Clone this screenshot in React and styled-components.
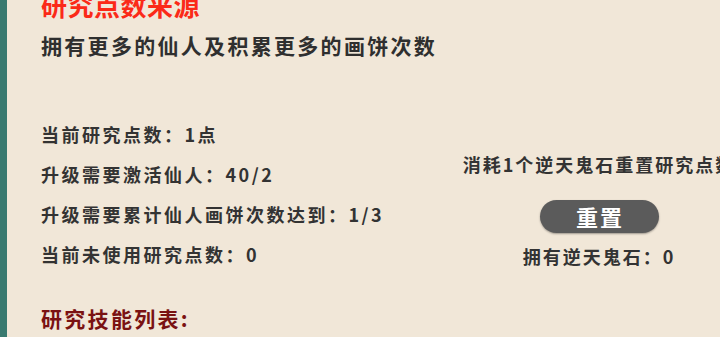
import React from "react";
import styled, { createGlobalStyle } from "styled-components";

const Global = createGlobalStyle`
  html, body {
    margin: 0;
    padding: 0;
    background: #f1e7d8;
    overflow: hidden;
  }
  body {
    font-family: "Noto Sans CJK SC", "Noto Sans", sans-serif;
  }
`;

const Page = styled.div`
  width: 720px;
  height: 337px;
  box-sizing: border-box;
  border-left: 7px solid #397a70;
  padding-left: 34px;
  overflow: hidden;
  background: #f1e7d8;
  display: flex;
  flex-direction: column;
`;

const Title = styled.h1`
  margin: -10px 0 0;
  font-size: 26px;
  line-height: 30px;
  font-weight: 700;
  color: #fb2a18;
  letter-spacing: 0.5px;
`;

const Subtitle = styled.h2`
  margin: 10px 0 0;
  font-size: 21px;
  line-height: 30px;
  font-weight: 700;
  color: #2f2f2f;
  letter-spacing: 2.3px;
`;

const Stats = styled.section`
  display: grid;
  grid-template-columns: 426px 264px;
  margin-top: 54px;
`;

const StatList = styled.div`
  display: flex;
  flex-direction: column;
`;

const StatLine = styled.div`
  font-size: 18px;
  line-height: 40px;
  font-weight: 700;
  color: #333;
  letter-spacing: 2.5px;
  white-space: nowrap;
`;

const ResetPanel = styled.div`
  display: flex;
  flex-direction: column;
  align-items: center;
  padding-top: 38px;
`;

const Note = styled.div`
  font-size: 18px;
  line-height: 24px;
  font-weight: 700;
  color: #333;
  letter-spacing: 2px;
  white-space: nowrap;
`;

const ResetButton = styled.button`
  margin-top: 24px;
  width: 119px;
  height: 33px;
  border: none;
  border-radius: 17px;
  background: #5b5b5b;
  box-shadow: 0 1px 2px rgba(0, 0, 0, 0.35);
  color: #fff;
  font-family: inherit;
  font-size: 22px;
  font-weight: 700;
  letter-spacing: 2px;
  line-height: 33px;
  padding: 0 0 0 2px;
  cursor: pointer;
`;

const Owned = styled(Note)`
  margin-top: 11px;
`;

const SkillTitle = styled.h3`
  margin: 29px 0 0;
  font-size: 21px;
  line-height: 30px;
  font-weight: 700;
  color: #7a1212;
  letter-spacing: 2.3px;
`;

const stats = [
  "当前研究点数：1点",
  "升级需要激活仙人：40/2",
  "升级需要累计仙人画饼次数达到：1/3",
  "当前未使用研究点数：0",
];

export default function App() {
  return (
    <>
      <Global />
      <Page>
        <Title>研究点数来源</Title>
        <Subtitle>拥有更多的仙人及积累更多的画饼次数</Subtitle>
        <Stats>
          <StatList>
            {stats.map((s) => (
              <StatLine key={s}>{s}</StatLine>
            ))}
          </StatList>
          <ResetPanel>
            <Note>消耗1个逆天鬼石重置研究点数</Note>
            <ResetButton>重置</ResetButton>
            <Owned>拥有逆天鬼石：0</Owned>
          </ResetPanel>
        </Stats>
        <SkillTitle>研究技能列表:</SkillTitle>
      </Page>
    </>
  );
}
